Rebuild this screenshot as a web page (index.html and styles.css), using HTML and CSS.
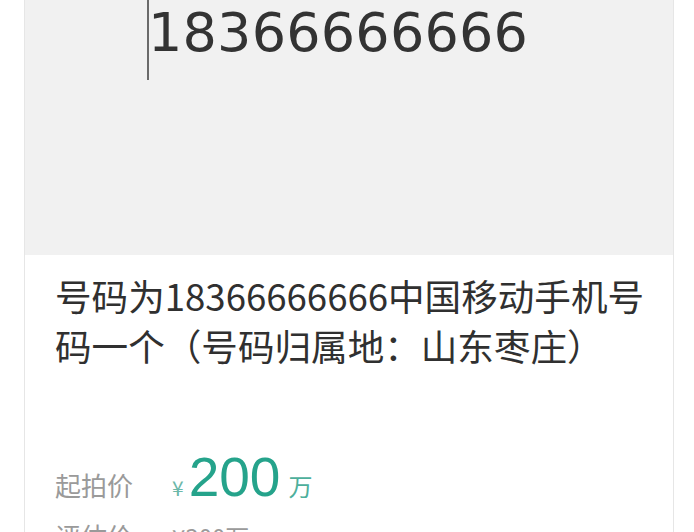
FILE: index.html
```html
<!DOCTYPE html>
<html lang="zh">
<head>
<meta charset="utf-8">
<link rel="stylesheet" href="styles.css">
</head>
<body>
<div class="card">
  <div class="pic">
    <div class="num"><span class="caret"></span>18366666666</div>
  </div>
  <div class="info">
    <div class="title">号码为18366666666中国移动手机号码一个（号码归属地：山东枣庄）</div>
    <div class="price">
      <span class="label">起拍价</span>
      <span class="yen">¥</span><span class="amount">200</span><span class="unit">万</span>
    </div>
    <div class="price2">
      <span class="label">评估价</span>
      <span class="small">¥300万</span>
    </div>
  </div>
</div>
</body>
</html>
```
FILE: styles.css
```css
html, body {
  margin: 0;
  padding: 0;
  background: #ffffff;
  overflow: hidden;
}
body {
  width: 694px;
  height: 532px;
}
.card {
  margin-left: 24px;
  width: 648px;
  border-left: 1px solid #e6e6e6;
  border-right: 1px solid #e6e6e6;
  height: 600px;
}
.pic {
  height: 255px;
  background: #f1f1f1;
  position: relative;
}
.num {
  position: relative;
  padding-left: 123px;
  font-family: "DejaVu Sans", sans-serif;
  font-size: 54px;
  line-height: 60px;
  color: #333333;
  padding-top: 3px;
  letter-spacing: 0.2px;
}
.caret {
  position: absolute;
  left: 122px;
  top: 0;
  width: 2px;
  height: 80px;
  background: #6a6a6a;
}
.info {
  padding: 16px 10px 0 30px;
  font-family: "Noto Sans CJK SC", sans-serif;
}
.title {
  font-size: 36.6px;
  line-height: 50px;
  color: #303030;
}
.price {
  display: flex;
  align-items: baseline;
  margin-top: 78px;
  height: 56px;
}
.label {
  font-size: 26px;
  color: #9a9a9a;
  width: 117px;
}
.yen {
  font-size: 21px;
  color: #6cb8a9;
  margin-right: 5px;
}
.amount {
  font-family: "Liberation Sans", sans-serif;
  font-size: 55px;
  color: #25a38b;
  line-height: 56px;
}
.unit {
  font-size: 24px;
  color: #4daf9c;
  margin-left: 8px;
}
.price2 {
  display: flex;
  align-items: baseline;
  margin-top: 12px;
}
.small {
  font-size: 24px;
  color: #9a9a9a;
}
```
